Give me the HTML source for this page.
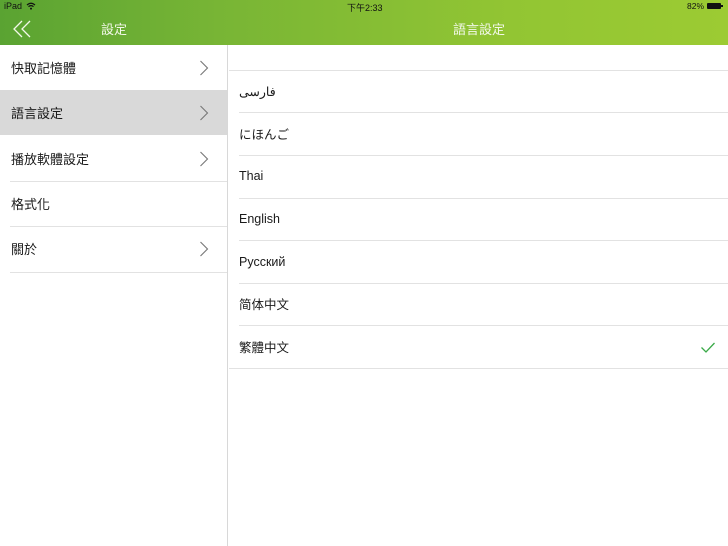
<!DOCTYPE html>
<html><head><meta charset="utf-8"><style>
*{margin:0;padding:0;box-sizing:border-box}
body{width:728px;height:546px;overflow:hidden;background:#fff;font-family:"Liberation Sans","Noto Sans CJK TC",sans-serif;position:relative;color:#1a1a1a}
.hdr{position:absolute;left:0;top:0;width:728px;height:45px;background:linear-gradient(90deg,#5aa332 0%,#78b535 30%,#92c533 70%,#9ccb33 100%)}
.sb{position:absolute;top:1px;font-size:9px;color:#111}
.t{position:absolute;top:19px;color:#f2f8e8;font-size:13px}
.left{position:absolute;left:0;top:45px;width:228px;height:501px;border-right:1px solid #d8d8d8}
.row{position:absolute;left:0;width:227px;height:45px}
.row span{position:absolute;left:11px;top:13px;font-size:13px}
.sep{position:absolute;left:10px;right:0;height:1px;background:#e2e2e2}
.chev{position:absolute;left:199px;top:15px}
.r{position:absolute;left:239px;font-size:12.5px}
.rs{position:absolute;left:239px;right:0;height:1px;background:#e2e2e2}
</style></head><body>
<div class="hdr"></div>
<div class="sb" style="left:4px">iPad</div>
<svg style="position:absolute;left:26px;top:2px" width="10" height="8" viewBox="0 0 10 8"><path d="M1 3Q5 -0.5 9 3M2.5 4.6Q5 2.6 7.5 4.6" stroke="#111" stroke-width="1.2" fill="none"/><circle cx="5" cy="6.6" r="1" fill="#111"/></svg>
<div class="sb" style="left:347px">下午2:33</div>
<div class="sb" style="left:687px;font-size:8.5px">82%</div>
<div style="position:absolute;left:707px;top:3px;width:14px;height:6px;background:#111;border-radius:1px"></div>
<div style="position:absolute;left:721px;top:5px;width:1.5px;height:2px;background:#111"></div>
<svg style="position:absolute;left:12px;top:20px" width="20" height="18" viewBox="0 0 20 18"><path d="M10 1L2 9L10 17M18 1L10 9L18 17" stroke="#f2f8e8" stroke-width="1.3" fill="none"/></svg>
<div class="t" style="left:101px">設定</div>
<div class="t" style="left:453px">語言設定</div>

<div class="left">
<div class="row" style="top:0"><span>快取記憶體</span><svg class="chev" width="10" height="16"><path d="M1.5 1L8.5 8L1.5 15" stroke="#777" stroke-width="1.1" fill="none"/></svg></div>
<div class="row" style="top:45px;background:#d9d9d9"><span>語言設定</span><svg class="chev" width="10" height="16"><path d="M1.5 1L8.5 8L1.5 15" stroke="#777" stroke-width="1.1" fill="none"/></svg></div>
<div class="row" style="top:91px"><span>播放軟體設定</span><svg class="chev" width="10" height="16"><path d="M1.5 1L8.5 8L1.5 15" stroke="#777" stroke-width="1.1" fill="none"/></svg></div>
<div class="sep" style="top:136px"></div>
<div class="row" style="top:136px"><span>格式化</span></div>
<div class="sep" style="top:181px"></div>
<div class="row" style="top:181px"><span>關於</span><svg class="chev" width="10" height="16"><path d="M1.5 1L8.5 8L1.5 15" stroke="#777" stroke-width="1.1" fill="none"/></svg></div>
<div class="sep" style="top:227px"></div>
</div>

<div style="position:absolute;left:229px;right:0;top:70px;height:1px;background:#e2e2e2"></div>
<div class="r" style="top:84px" dir="ltr"><span dir="rtl">فارسی</span></div>
<div class="rs" style="top:112px"></div>
<div class="r" style="top:124px">にほんご</div>
<div class="rs" style="top:155px"></div>
<div class="r" style="top:169px">Thai</div>
<div class="rs" style="top:198px"></div>
<div class="r" style="top:212px">English</div>
<div class="rs" style="top:240px"></div>
<div class="r" style="top:255px">Русский</div>
<div class="rs" style="top:283px"></div>
<div class="r" style="top:294px">简体中文</div>
<div class="rs" style="top:325px"></div>
<div class="r" style="top:337px">繁體中文</div>
<svg style="position:absolute;left:700px;top:341px" width="16" height="13" viewBox="0 0 16 13"><path d="M1.5 6.5L6 11L14.5 2" stroke="#3aaa48" stroke-width="1.3" fill="none"/></svg>
<div style="position:absolute;left:229px;right:0;top:368px;height:1px;background:#e2e2e2"></div>
</body></html>
